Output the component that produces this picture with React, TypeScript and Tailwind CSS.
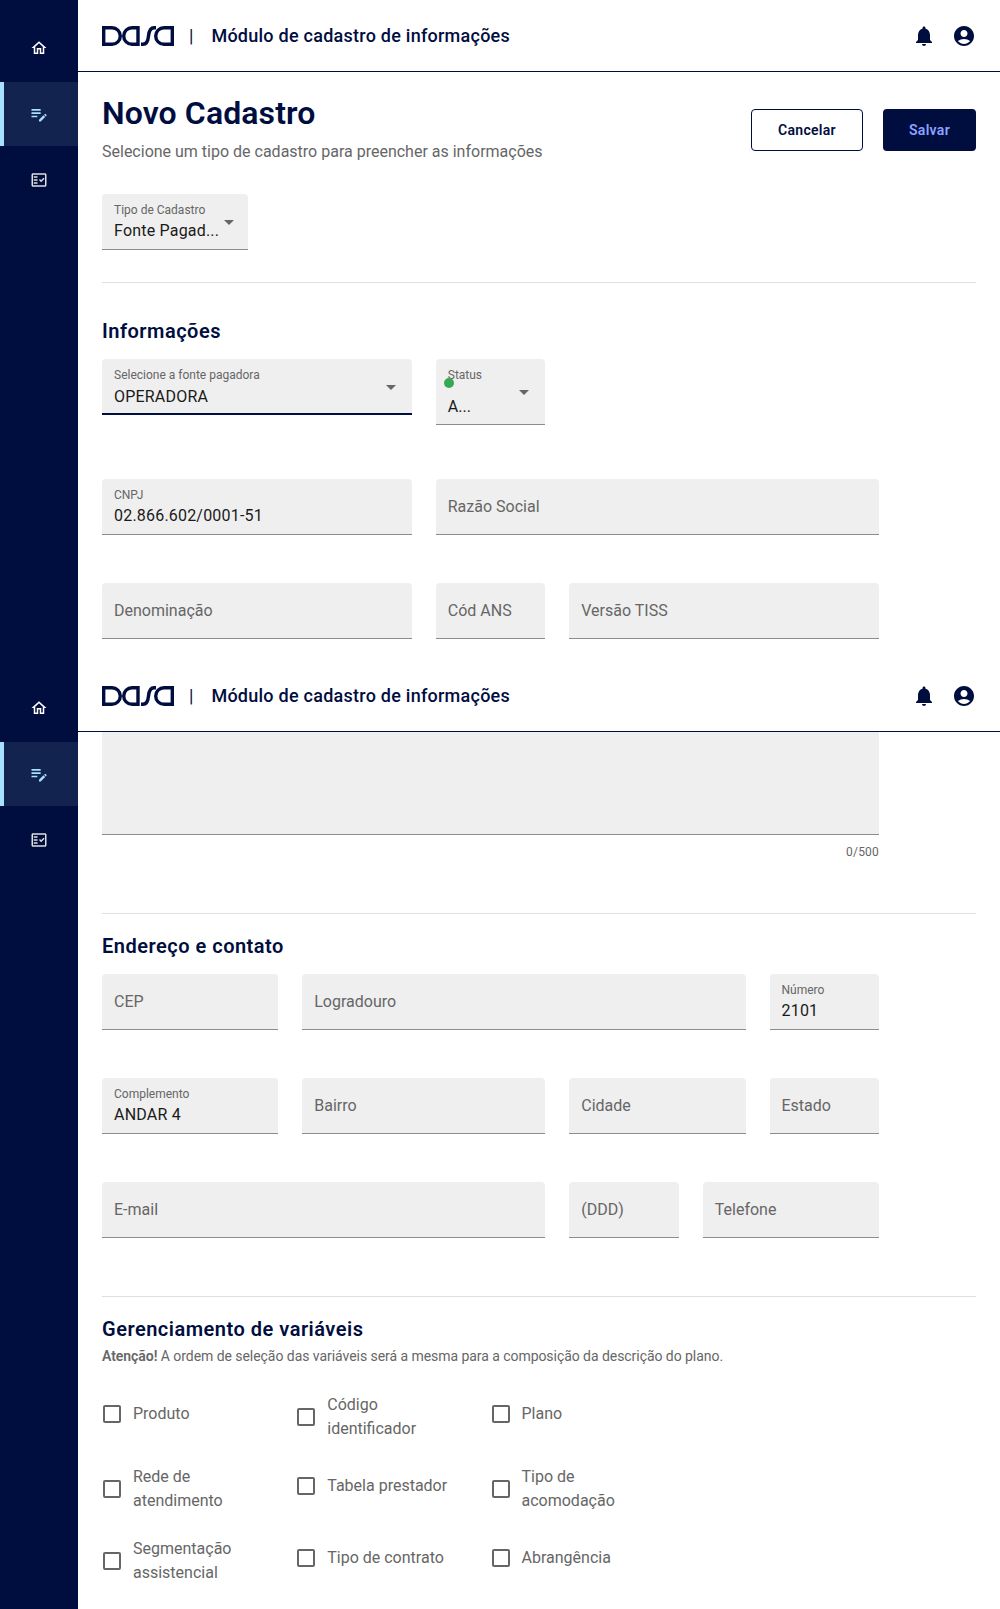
import { MdAccountCircle, MdNotifications, MdOutlineEditNote, MdOutlineFactCheck, MdOutlineHome } from 'react-icons/md';

interface FieldProps {
  label: string;
  value?: string;
  className?: string;
  select?: boolean;
  focused?: boolean;
  caretClassName?: string;
}

function Field({ label, value, className = '', select, focused, caretClassName = 'right-4 top-[26px]' }: FieldProps) {
  return (
    <div className={`relative h-14 rounded-t-[4px] bg-[#efefef] px-3 ${focused ? 'border-b-2 border-[#000d3f]' : 'border-b border-[#8c8c8c]'} ${className}`}>
      {value ? (
        <>
          <div className="pt-2 text-xs leading-4 text-[#666]">{label}</div>
          <div className={`${focused ? 'mt-0.5' : 'mt-[1px]'} text-base leading-6 tracking-[0.2px] text-[#1a1a1a]`}>{value}</div>
        </>
      ) : (
        <div className="pt-4 text-base leading-6 text-[#666]">{label}</div>
      )}
      {select && <Caret className={caretClassName} />}
    </div>
  );
}

function Caret({ className }: { className: string }) {
  return <span className={`absolute h-0 w-0 border-x-[5px] border-t-[5px] border-x-transparent border-t-[#666] ${className}`} />;
}

function Logo() {
  return (
    <svg width="72" height="20" viewBox="0 0 72 20" fill="none" stroke="#000d3f" strokeWidth="3.4">
      <path d="M1.7 1.7H10a8.3 8.3 0 0 1 0 16.6H1.7Z" />
      <path d="M36 1.7H30a8.3 8.3 0 0 0 0 16.6H36Z" />
      <path d="M39 18.3H41C45 18.3 46 15 46.5 10C47 5 48 1.7 52 1.7H54" />
      <path d="M70.3 1.7H62a8.3 8.3 0 0 0 0 16.6H70.3Z" />
    </svg>
  );
}

function TopBar() {
  return (
    <header className="flex h-[72px] items-center border-b border-[#000d3f] bg-white pl-6 pr-[24px]">
      <Logo />
      <span className="ml-[15px] text-lg leading-6 text-[#000d3f]">|</span>
      <span className="ml-[18px] text-lg font-medium leading-6 tracking-[0.25px] text-[#000d3f]">Módulo de cadastro de informações</span>
      <div className="ml-auto flex items-center gap-4 text-[#000d3f]">
        <MdNotifications size={24} />
        <MdAccountCircle size={24} />
      </div>
    </header>
  );
}

function SideNav() {
  return (
    <nav className="flex flex-col gap-0.5 pt-4 text-white">
      <div className="flex h-16 items-center justify-center">
        <MdOutlineHome size={18} />
      </div>
      <div className="flex h-16 items-center justify-center border-l-4 border-[#a8e0ff] bg-[#12234f] pr-1 text-[#a8e0ff]">
        <MdOutlineEditNote size={20} />
      </div>
      <div className="flex h-16 items-center justify-center text-[#e0e0e0]">
        <MdOutlineFactCheck size={18} />
      </div>
    </nav>
  );
}

function Check({ label }: { label: string }) {
  const twoLines = label.length > 17;
  return (
    <div className={`flex items-center gap-3 pl-px ${twoLines ? '' : 'pb-1.5'}`}>
      <span className="h-[18px] w-[18px] shrink-0 rounded-[2px] border-2 border-[#666]" />
      <span className="w-[125px] text-base leading-6 text-[#666]">{label}</span>
    </div>
  );
}

const variables = [
  'Produto',
  'Código identificador',
  'Plano',
  'Rede de atendimento',
  'Tabela prestador',
  'Tipo de acomodação',
  'Segmentação assistencial',
  'Tipo de contrato',
  'Abrangência',
];

export default function App() {
  return (
    <div className="flex h-[1609px] w-[1000px] overflow-hidden bg-white font-[Roboto,sans-serif]">
      <aside className="w-[78px] shrink-0 bg-[#000d3f]">
        <div className="h-[660px]">
          <SideNav />
        </div>
        <SideNav />
      </aside>

      <main className="min-w-0 flex-1">
        {/* first capture of the page, cut where the fixed header lands again */}
        <section className="h-[660px] overflow-hidden">
          <TopBar />
          <div className="px-6">
            <div className="flex items-start justify-between">
              <div>
                <h1 className="mt-[21px] text-[32px] font-semibold leading-10 tracking-[0.1px] text-[#000d3f]">Novo Cadastro</h1>
                <p className="mt-[7px] text-base leading-6 text-[#666]">Selecione um tipo de cadastro para preencher as informações</p>
              </div>
              <div className="mt-[37px] flex gap-5">
                <button className="h-[42px] w-[112px] rounded-[4px] border border-[#000d3f] text-sm font-semibold tracking-[0.3px] text-[#000d3f]">Cancelar</button>
                <button className="h-[42px] w-[93px] rounded-[4px] bg-[#000d3f] text-sm font-semibold tracking-[0.3px] text-[#8ea2ff]">Salvar</button>
              </div>
            </div>

            <Field label="Tipo de Cadastro" value="Fonte Pagad..." select caretClassName="right-[14px] top-[26px]" className="mt-[30px] w-[146px]" />
            <hr className="mt-8 border-[#e0e0e0]" />

            <h2 className="mt-[34px] text-xl font-semibold leading-7 tracking-[0.5px] text-[#000d3f]">Informações</h2>
            <div className="mt-[14px] grid w-[777px] grid-cols-12 items-start gap-x-6">
              <Field label="Selecione a fonte pagadora" value="OPERADORA" select focused className="col-span-5" />
              <div className="relative col-span-2 h-[66px] rounded-t-[4px] border-b border-[#8c8c8c] bg-[#efefef] px-3">
                <div className="pt-2 text-xs leading-4 text-[#666]">Status</div>
                <div className="mt-3 text-base leading-6 text-[#1a1a1a]">A...</div>
                <span className="absolute left-2 top-[19px] h-2.5 w-2.5 rounded-full bg-[#34a853]" />
                <Caret className="right-4 top-[31px]" />
              </div>
            </div>
            <div className="mt-[54px] grid w-[777px] grid-cols-12 gap-x-6 gap-y-12">
              <Field label="CNPJ" value="02.866.602/0001-51" className="col-span-5" />
              <Field label="Razão Social" className="col-span-7" />
              <Field label="Denominação" className="col-span-5" />
              <Field label="Cód ANS" className="col-span-2" />
              <Field label="Versão TISS" className="col-span-5" />
            </div>
          </div>
        </section>

        <section>
          <TopBar />
          <div className="px-6">
            <div className="h-[103px] w-[777px] border-b border-[#8c8c8c] bg-[#efefef]" />
            <div className="mt-[9px] w-[777px] text-right text-xs leading-4 tracking-[0.2px] text-[#666]">0/500</div>
            <hr className="mt-[53px] border-[#e0e0e0]" />

            <h2 className="mt-[18px] text-xl font-semibold leading-7 tracking-[0.5px] text-[#000d3f]">Endereço e contato</h2>
            <div className="mt-[14px] grid w-[777px] grid-cols-12 gap-x-6 gap-y-12">
              <Field label="CEP" className="col-span-3" />
              <Field label="Logradouro" className="col-span-7" />
              <Field label="Número" value="2101" className="col-span-2" />
              <Field label="Complemento" value="ANDAR 4" className="col-span-3" />
              <Field label="Bairro" className="col-span-4" />
              <Field label="Cidade" className="col-span-3" />
              <Field label="Estado" className="col-span-2" />
              <Field label="E-mail" className="col-span-7" />
              <Field label="(DDD)" className="col-span-2" />
              <Field label="Telefone" className="col-span-3" />
            </div>
            <hr className="mt-[58px] border-[#e0e0e0]" />

            <h2 className="mt-[18px] text-xl font-semibold leading-7 tracking-[0.5px] text-[#000d3f]">Gerenciamento de variáveis</h2>
            <p className="mt-[3px] text-sm leading-5 tracking-[-0.05px] text-[#666]">
              <strong className="font-semibold">Atenção!</strong> A ordem de seleção das variáveis será a mesma para a composição da descrição do plano.
            </p>
            <div className="mt-[27px] grid w-[777px] grid-cols-4 gap-y-6">
              {variables.map((label, i) => (
                <div key={label} className={`h-12 ${i % 3 === 0 ? 'col-start-1' : ''}`}>
                  <div className="flex h-full items-center">
                    <Check label={label} />
                  </div>
                </div>
              ))}
            </div>
          </div>
        </section>
      </main>
    </div>
  );
}
